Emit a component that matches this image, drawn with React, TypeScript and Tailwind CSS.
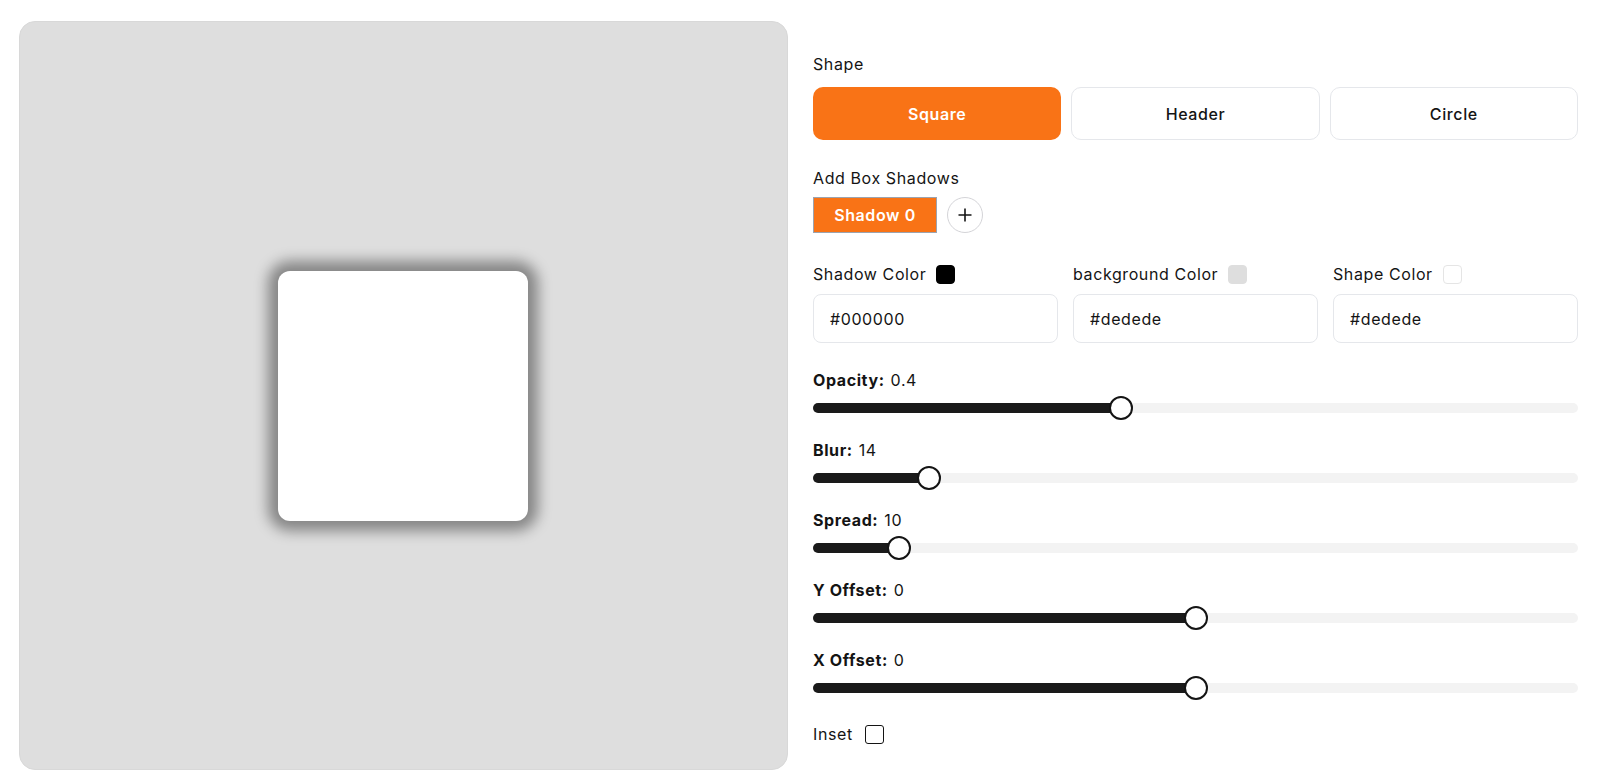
import React, { useState } from 'react';

const font = { fontFamily: 'Inter, "Liberation Sans", sans-serif' };

type SliderProps = { label: string; value: number; min: number; max: number };

// fixed track: 765px wide, 24px thumb
const Slider: React.FC<SliderProps> = ({ label, value, min, max }) => {
  const pct = (value - min) / (max - min);
  const center = 12 + pct * (765 - 24);
  return (
    <div className="flex flex-col">
      <div className="mt-[18px] h-6 flex items-center text-[16px] text-[#141414]">
        <span className="font-bold">{label}:</span>
        <span className="ml-[6px]">{value}</span>
      </div>
      <div className="mt-1 relative h-6 w-[765px]">
        <div className="absolute left-0 right-0 top-[7px] h-[10px] rounded-full bg-[#f3f3f3]" />
        <div className="absolute left-0 top-[7px] h-[10px] rounded-full bg-[#1a1a1a]" style={{ width: center }} />
        <div
          className="absolute top-0 w-6 h-6 rounded-full bg-white border-2 border-[#141414]"
          style={{ left: center - 12 }}
        />
      </div>
    </div>
  );
};

export default function App() {
  const [shape, setShape] = useState('Square');
  const colors = [
    { label: 'Shadow Color', value: '#000000', swatch: 'bg-black border-black' },
    { label: 'background Color', value: '#dedede', swatch: 'bg-[#dedede] border-[#dedede]' },
    { label: 'Shape Color', value: '#dedede', swatch: 'bg-white border-[#e5e5e5]' },
  ];

  return (
    <div className="w-[1604px] h-[784px] bg-white flex pl-[19px] pt-[21px] gap-[25px]" style={font}>
      <div className="w-[769px] h-[749px] rounded-2xl bg-[#dedede] border border-[#d8d8d8] flex items-center justify-center shrink-0">
        <div className="w-[250px] h-[250px] -ml-[2px] rounded-xl bg-white shadow-[0_0_14px_10px_rgba(0,0,0,0.4)]" />
      </div>

      <div className="w-[765px] flex flex-col pt-[31px] text-[#141414] tracking-[0.6px]">
        <div className="h-6 flex items-center text-[16px]">Shape</div>
        <div className="mt-[11px] grid grid-cols-3 gap-[10px]">
          {['Square', 'Header', 'Circle'].map((s) => (
            <button
              key={s}
              onClick={() => setShape(s)}
              className={`h-[53px] rounded-[10px] text-[16px] ${
                shape === s
                  ? 'bg-[#f97316] text-white font-semibold'
                  : 'bg-white border border-[#e5e7eb] text-[#141414] font-medium'
              }`}
            >
              {s}
            </button>
          ))}
        </div>

        <div className="mt-[26px] h-6 flex items-center text-[16px]">Add Box Shadows</div>
        <div className="mt-[7px] flex items-center gap-[10px]">
          <button className="w-[124px] h-9 bg-[#f97316] border border-[#9ca3af] text-white text-[16px] font-semibold">
            Shadow 0
          </button>
          <button className="w-9 h-9 rounded-full border border-[#d4d4d8] bg-white flex items-center justify-center">
            <svg width="16" height="16" viewBox="0 0 16 16" fill="none" stroke="#141414" strokeWidth="1.6">
              <path d="M8 1.5v13M1.5 8h13" />
            </svg>
          </button>
        </div>

        <div className="mt-[29px] grid grid-cols-3 gap-[15px]">
          {colors.map((c) => (
            <div key={c.label} className="flex flex-col">
              <div className="h-6 flex items-center gap-[10px] text-[16px]">
                <span>{c.label}</span>
                <span className={`w-[19px] h-[19px] rounded-[4px] border ${c.swatch}`} />
              </div>
              <div className="mt-2 h-[49px] rounded-lg border border-[#e5e7eb] flex items-center px-4 text-[16px]">
                {c.value}
              </div>
            </div>
          ))}
        </div>

        <div className="mt-[7px]">
          <Slider label="Opacity" value={0.4} min={0} max={1} />
          <Slider label="Blur" value={14} min={0} max={100} />
          <Slider label="Spread" value={10} min={0} max={100} />
          <Slider label="Y Offset" value={0} min={-100} max={100} />
          <Slider label="X Offset" value={0} min={-100} max={100} />
        </div>

        <div className="mt-[22px] h-6 flex items-center gap-[12px] text-[16px]">
          <span>Inset</span>
          <span className="w-[19px] h-[19px] rounded-[3px] border border-[#141414] bg-white" />
        </div>
      </div>
    </div>
  );
}
